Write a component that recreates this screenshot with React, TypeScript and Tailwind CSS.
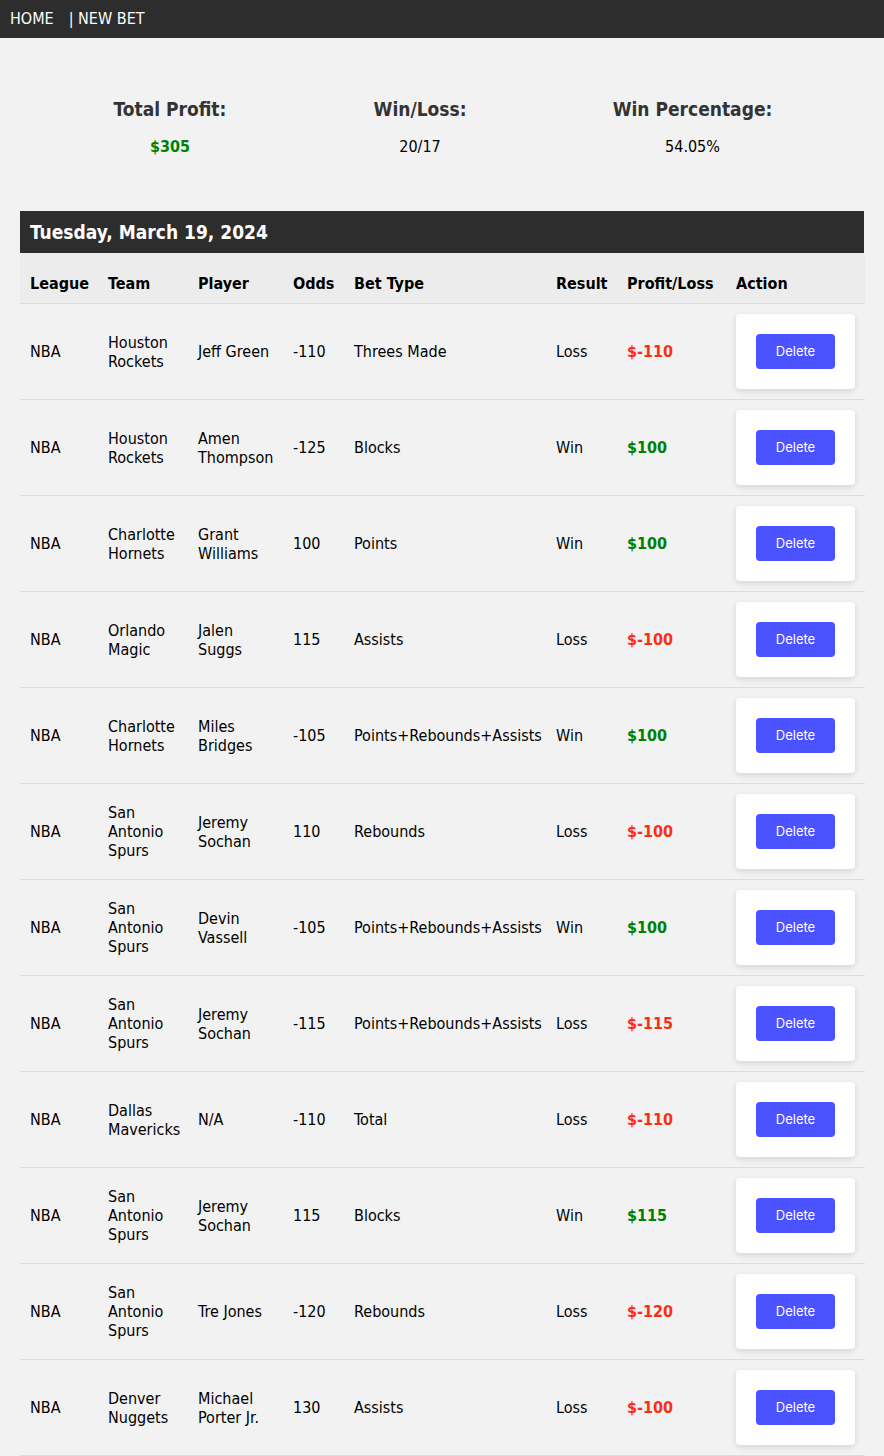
import React from "react";

type Bet = {
  team: string;
  player: string;
  odds: string;
  type: string;
  result: string;
  pl: string;
  win: boolean;
};

const bets: Bet[] = [
  { team: "Houston Rockets", player: "Jeff Green", odds: "-110", type: "Threes Made", result: "Loss", pl: "$-110", win: false },
  { team: "Houston Rockets", player: "Amen Thompson", odds: "-125", type: "Blocks", result: "Win", pl: "$100", win: true },
  { team: "Charlotte Hornets", player: "Grant Williams", odds: "100", type: "Points", result: "Win", pl: "$100", win: true },
  { team: "Orlando Magic", player: "Jalen Suggs", odds: "115", type: "Assists", result: "Loss", pl: "$-100", win: false },
  { team: "Charlotte Hornets", player: "Miles Bridges", odds: "-105", type: "Points+Rebounds+Assists", result: "Win", pl: "$100", win: true },
  { team: "San Antonio Spurs", player: "Jeremy Sochan", odds: "110", type: "Rebounds", result: "Loss", pl: "$-100", win: false },
  { team: "San Antonio Spurs", player: "Devin Vassell", odds: "-105", type: "Points+Rebounds+Assists", result: "Win", pl: "$100", win: true },
  { team: "San Antonio Spurs", player: "Jeremy Sochan", odds: "-115", type: "Points+Rebounds+Assists", result: "Loss", pl: "$-115", win: false },
  { team: "Dallas Mavericks", player: "N/A", odds: "-110", type: "Total", result: "Loss", pl: "$-110", win: false },
  { team: "San Antonio Spurs", player: "Jeremy Sochan", odds: "115", type: "Blocks", result: "Win", pl: "$115", win: true },
  { team: "San Antonio Spurs", player: "Tre Jones", odds: "-120", type: "Rebounds", result: "Loss", pl: "$-120", win: false },
  { team: "Denver Nuggets", player: "Michael Porter Jr.", odds: "130", type: "Assists", result: "Loss", pl: "$-100", win: false },
];

const font = "font-['DejaVu_Sans_Condensed','Liberation_Sans',sans-serif]";

export default function App() {
  return (
    <div className={`min-h-[1456px] bg-[#f2f2f2] text-black ${font}`}>
      <nav className="flex h-[38px] items-center bg-[#2d2d2d] px-[10px] text-[16px] text-white">
        <span>HOME</span>
        <span className="ml-[15px]">| NEW BET</span>
      </nav>

      <div className="px-[20px]">
        <div className="grid grid-cols-[300px_200px_345px] pt-[59px] pb-[54px] text-center">
          <div>
            <div className="text-[19px] font-bold leading-[24px] text-[#333]">Total Profit:</div>
            <div className="mt-[16px] text-[16px] font-bold leading-[20px] text-[#008000]">$305</div>
          </div>
          <div>
            <div className="text-[19px] font-bold leading-[24px] text-[#333]">Win/Loss:</div>
            <div className="mt-[16px] text-[16px] leading-[20px]">20/17</div>
          </div>
          <div>
            <div className="text-[19px] font-bold leading-[24px] text-[#333]">Win Percentage:</div>
            <div className="mt-[16px] text-[16px] leading-[20px]">54.05%</div>
          </div>
        </div>

        <div className="flex h-[42px] items-center bg-[#2d2d2d] px-[10px] pt-[1px] text-[19px] font-bold text-white">
          Tuesday, March 19, 2024
        </div>

        <table className="w-[845px] table-fixed border-collapse text-left text-[16px] leading-[19px]">
          <colgroup>
            <col className="w-[78px]" />
            <col className="w-[90px]" />
            <col className="w-[95px]" />
            <col className="w-[61px]" />
            <col className="w-[202px]" />
            <col className="w-[71px]" />
            <col className="w-[109px]" />
            <col className="w-[139px]" />
          </colgroup>
          <thead>
            <tr className="border-b border-[#dddddd] bg-[#ececec]">
              {["League", "Team", "Player", "Odds", "Bet Type", "Result", "Profit/Loss", "Action"].map((h) => (
                <th key={h} className="px-[10px] pt-[21px] pb-[10px] font-bold">
                  {h}
                </th>
              ))}
            </tr>
          </thead>
          <tbody>
            {bets.map((b, i) => (
              <tr key={i} className="border-b border-[#dddddd]">
                <td className="px-[10px] py-[10px]">NBA</td>
                <td className="px-[10px] py-[10px]">{b.team}</td>
                <td className="px-[10px] py-[10px]">{b.player}</td>
                <td className="px-[10px] py-[10px]">{b.odds}</td>
                <td className="px-[10px] py-[10px]">{b.type}</td>
                <td className="px-[10px] py-[10px]">{b.result}</td>
                <td className={`px-[10px] py-[10px] font-bold ${b.win ? "text-[#008000]" : "text-[#ff2b14]"}`}>{b.pl}</td>
                <td className="px-[10px] py-[10px]">
                  <div className="flex h-[75px] w-[119px] items-center justify-center rounded-[4px] bg-white shadow-[0_2px_6px_rgba(0,0,0,0.12)]">
                    <button className="h-[35px] w-[79px] rounded-[4px] bg-[#4b52ff] font-['Inter',sans-serif] text-[13px] text-white">
                      Delete
                    </button>
                  </div>
                </td>
              </tr>
            ))}
          </tbody>
        </table>
      </div>
    </div>
  );
}
